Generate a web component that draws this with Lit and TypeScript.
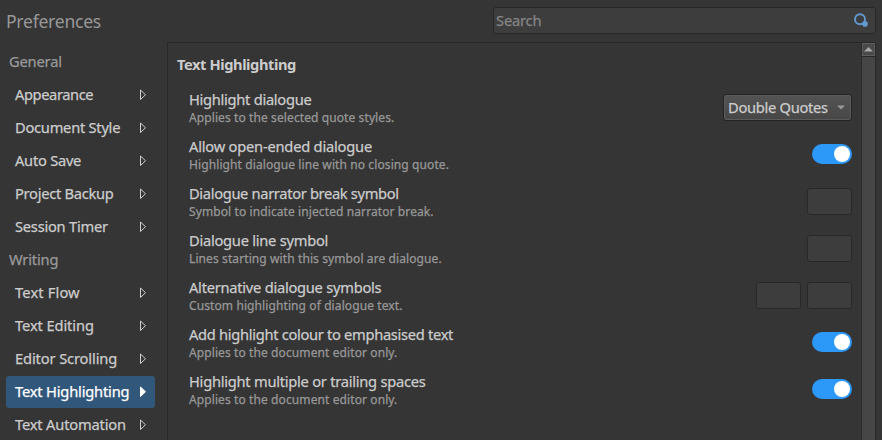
import { LitElement, html, css } from "lit";
import { customElement, property } from "lit/decorators.js";
import { styleMap } from "lit/directives/style-map.js";

interface Setting {
  label: string;
  help: string;
  kind: "select" | "switch" | "symbol" | "pair";
  tracking: number;
}

interface Page {
  name: string;
  tracking: number;
}

const general: Page[] = [
  { name: "Appearance", tracking: -0.4 },
  { name: "Document Style", tracking: -0.25 },
  { name: "Auto Save", tracking: -0.25 },
  { name: "Project Backup", tracking: -0.28 },
  { name: "Session Timer", tracking: -0.23 },
];
const writing: Page[] = [
  { name: "Text Flow", tracking: 0.15 },
  { name: "Text Editing", tracking: -0.1 },
  { name: "Editor Scrolling", tracking: -0.12 },
  { name: "Text Highlighting", tracking: -0.18 },
  { name: "Text Automation", tracking: -0.17 },
];

const settings: Setting[] = [
  { label: "Highlight dialogue", help: "Applies to the selected quote styles.", kind: "select", tracking: -0.28 },
  { label: "Allow open-ended dialogue", help: "Highlight dialogue line with no closing quote.", kind: "switch", tracking: -0.21 },
  { label: "Dialogue narrator break symbol", help: "Symbol to indicate injected narrator break.", kind: "symbol", tracking: -0.33 },
  { label: "Dialogue line symbol", help: "Lines starting with this symbol are dialogue.", kind: "symbol", tracking: -0.25 },
  { label: "Alternative dialogue symbols", help: "Custom highlighting of dialogue text.", kind: "pair", tracking: -0.25 },
  { label: "Add highlight colour to emphasised text", help: "Applies to the document editor only.", kind: "switch", tracking: -0.3 },
  { label: "Highlight multiple or trailing spaces", help: "Applies to the document editor only.", kind: "switch", tracking: -0.25 },
];

const spacing = (px: number) => styleMap({ letterSpacing: `${px}px` });

@customElement("pref-nav")
class PrefNav extends LitElement {
  @property() selected = "";

  static styles = css`
    :host { display: block; width: 149px; padding-left: 6px; flex: none; }
    .head, .item { height: 32px; margin-bottom: 1px; display: flex; align-items: center; box-sizing: border-box; white-space: nowrap; }
    .head { padding: 0 0 2px 3px; color: #9a9a9a; letter-spacing: -0.17px; }
    .item { padding: 0 8px 0 9px; justify-content: space-between; border-radius: 3px; color: #cccccc; }
    .item span { padding-bottom: 2px; }
    .item.on { background: #31587a; color: #ffffff; }
    svg { display: block; flex: none; fill: none; stroke: #d0d0d0; }
    .on svg { fill: #ffffff; stroke: #ffffff; }
  `;

  private item(page: Page) {
    return html`<div class="item ${page.name === this.selected ? "on" : ""}">
      <span style=${spacing(page.tracking)}>${page.name}</span>
      <svg width="7" height="12" viewBox="0 0 7 12"><path d="M0.5 1V10.5L5.5 5.75Z" /></svg>
    </div>`;
  }

  render() {
    return html`
      <div class="head">General</div>
      ${general.map((p) => this.item(p))}
      <div class="head">Writing</div>
      ${writing.map((p) => this.item(p))}
    `;
  }
}

@customElement("pref-setting")
class PrefSetting extends LitElement {
  @property({ attribute: false }) setting!: Setting;

  static styles = css`
    :host { display: flex; height: 47px; align-items: center; justify-content: space-between; white-space: nowrap; }
    .label { line-height: 18px; padding-bottom: 2px; color: #cccccc; }
    .help { font-size: 12px; line-height: 16px; color: #989898; letter-spacing: 0.1px; }
    .fields { display: flex; gap: 6px; }
    .box { width: 45px; height: 27px; box-sizing: border-box; border: 1px solid #282828; border-radius: 3px; background: #3d3d3d; }
    .switch { width: 40px; height: 20px; margin-bottom: 1px; border-radius: 10px; background: #2c98f8; box-sizing: border-box; padding: 2px; display: flex; justify-content: flex-end; }
    .knob { width: 16px; height: 16px; border-radius: 50%; background: #ffffff; }
    .select { width: 129px; height: 27px; box-sizing: border-box; border: 1px solid #232323; border-radius: 3px; background: linear-gradient(#535353, #474747); box-shadow: inset 0 0 0 1px #5b5b5b; color: #cccccc; padding: 0 6px 0 4px; display: flex; align-items: center; justify-content: space-between; letter-spacing: -0.28px; }
    .select span { padding-bottom: 2px; }
    .select svg { fill: #989898; display: block; flex: none; }
  `;

  private control() {
    switch (this.setting.kind) {
      case "select":
        return html`<div class="select"><span>Double Quotes</span><svg width="8" height="5" viewBox="0 0 8 5"><path d="M0 0.5H8L4 4.5Z" /></svg></div>`;
      case "switch":
        return html`<div class="switch"><div class="knob"></div></div>`;
      case "pair":
        return html`<div class="box"></div><div class="box"></div>`;
      default:
        return html`<div class="box"></div>`;
    }
  }

  render() {
    const { label, help, tracking } = this.setting;
    return html`
      <div><div class="label" style=${spacing(tracking)}>${label}</div><div class="help">${help}</div></div>
      <div class="fields">${this.control()}</div>
    `;
  }
}

@customElement("app-root")
class AppRoot extends LitElement {
  static styles = css`
    :host { display: flex; flex-direction: column; width: 882px; height: 440px; overflow: hidden; background: #353535; font: 14.67px/20px "Noto Sans", sans-serif; -webkit-text-stroke: 0.25px; }
    .top { height: 42px; flex: none; display: flex; align-items: center; justify-content: space-between; box-sizing: border-box; padding: 0 6px; }
    .title { font-size: 17.6px; line-height: 24px; color: #989898; letter-spacing: -0.27px; -webkit-text-stroke: 0; }
    .search { width: 383px; height: 27px; box-sizing: border-box; border: 1px solid #282828; border-radius: 3px; background: #3d3d3d; color: #858585; display: flex; align-items: center; justify-content: space-between; padding: 0 6px 0 2px; margin-top: -1px; letter-spacing: -0.17px; }
    .search span { padding-bottom: 2px; }
    .search svg { display: block; flex: none; }
    .main { display: flex; flex: 1; min-height: 0; gap: 12px; }
    pref-nav { padding-top: 4px; }
    .panel { width: 709px; box-sizing: border-box; border: 1px solid #292929; border-bottom: 0; display: flex; overflow: hidden; }
    .content { flex: 1; padding: 11px 9px 0 9px; }
    h2 { margin: 0 0 10px; font-size: inherit; line-height: 20px; font-weight: 700; color: #cccccc; letter-spacing: -0.42px; -webkit-text-stroke: 0; }
    .list { padding-left: 12px; }
    .scroll { width: 14px; box-sizing: border-box; border-left: 1px solid #2a2a2a; background: #464646; }
    .up { height: 13px; box-sizing: border-box; border: 1px solid #5e5e5e; background: #494949; display: flex; align-items: center; justify-content: center; box-shadow: 0 1px #282828; }
    .up svg { fill: #a8a8a8; display: block; flex: none; }
  `;

  render() {
    return html`
      <div class="top">
        <div class="title">Preferences</div>
        <div class="search">
          <span>Search</span>
          <svg width="15" height="15" viewBox="0 0 15 15">
            <circle cx="6" cy="6.2" r="5" fill="none" stroke="#6199d0" stroke-width="1.9" />
            <circle cx="11" cy="10.9" r="2.8" fill="#6199d0" />
          </svg>
        </div>
      </div>
      <div class="main">
        <pref-nav selected="Text Highlighting"></pref-nav>
        <div class="panel">
          <div class="content">
            <h2>Text Highlighting</h2>
            <div class="list">${settings.map((s) => html`<pref-setting .setting=${s}></pref-setting>`)}</div>
          </div>
          <div class="scroll"><div class="up"><svg width="9" height="5" viewBox="0 0 9 5"><path d="M0 4.5H9L4.5 0Z" /></svg></div></div>
        </div>
      </div>
    `;
  }
}
